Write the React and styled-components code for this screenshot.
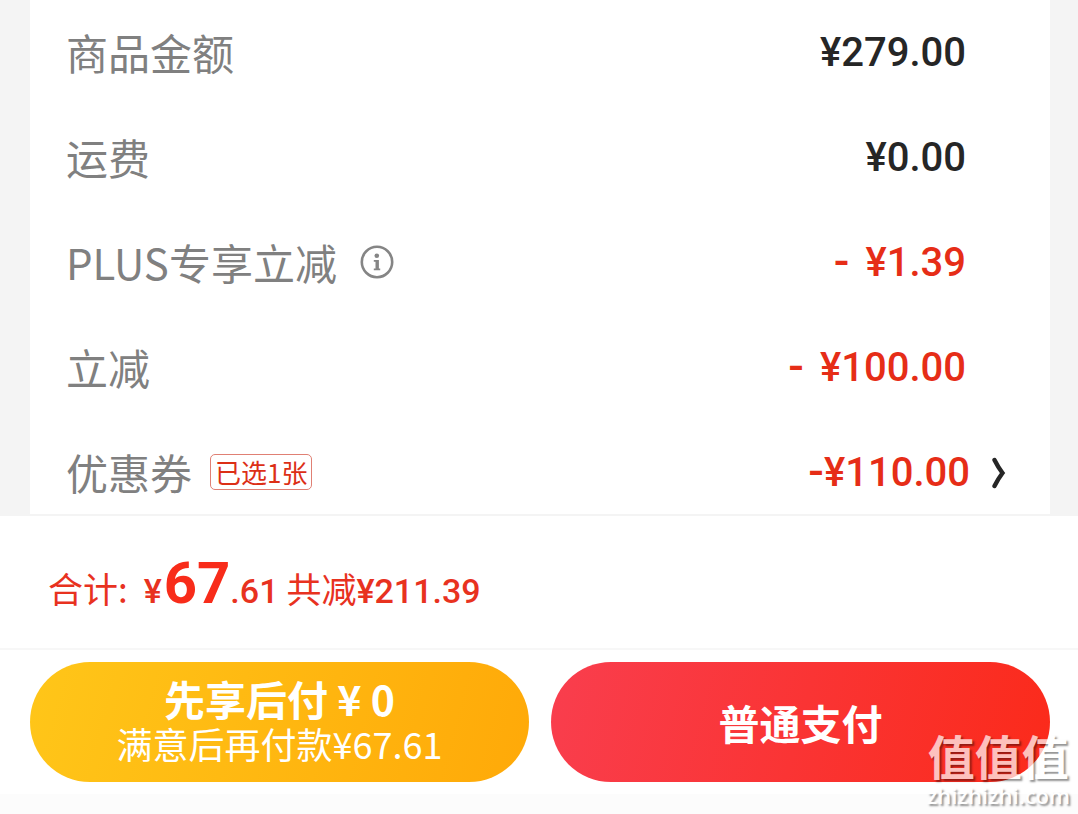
import React from 'react';
import styled, { createGlobalStyle } from 'styled-components';

const GlobalStyle = createGlobalStyle`
  * {
    box-sizing: border-box;
  }

  body {
    margin: 0;
    background: #fcfcfc;
    font-family: 'Noto Sans CJK SC', 'Noto Sans', sans-serif;
  }

  button {
    font-family: inherit;
    border: none;
    padding: 0;
    cursor: pointer;
  }
`;

const Page = styled.main`
  position: relative;
  min-height: 100vh;
  overflow: hidden;
`;

const PriceSection = styled.section`
  padding: 0 28px 0 30px;
  background: #f4f4f4;
`;

const PriceList = styled.dl`
  display: flex;
  flex-direction: column;
  gap: 25px;
  margin: 0;
  padding: 14px 84px 0 36px;
  background: #fff;
  border-bottom: 2px solid #f4f4f4;
`;

const PriceRow = styled.div`
  display: flex;
  align-items: center;
  justify-content: space-between;
  height: 80px;
`;

const Label = styled.dt`
  display: flex;
  align-items: center;
  padding-bottom: 4px;
  font-size: 42px;
  line-height: 76px;
  color: #808080;
`;

const Amount = styled.dd`
  display: flex;
  align-items: center;
  margin: 0 ${({ $linked }) => ($linked ? '-42px' : '0')} 2px 0;
  font-family: Roboto, 'Noto Sans CJK SC', sans-serif;
  font-size: 40px;
  font-weight: 500;
  line-height: 60px;
  color: ${({ $discount }) => ($discount ? '#e62d17' : '#262626')};
`;

const Sign = styled.span`
  margin-right: ${({ $spaced }) => ($spaced ? '16px' : '0')};
  padding-bottom: 4px;
  font-family: Roboto, sans-serif;
  font-size: 46px;
  line-height: 56px;
`;

const InfoButton = styled.button`
  display: flex;
  margin-left: 23px;
  background: none;
  color: #858585;
`;

const CouponTag = styled.span`
  margin-left: 18px;
  padding: 0 4px;
  border: 1px solid #e08074;
  border-radius: 5px;
  font-size: 26px;
  line-height: 34px;
  color: #dc2f16;
`;

const ArrowButton = styled.button`
  display: flex;
  margin-left: 22px;
  background: none;
  color: #262626;
`;

const TotalBar = styled.section`
  display: flex;
  align-items: baseline;
  height: 134px;
  padding: 25px 48px 0;
  background: #fff;
  border-bottom: 2px solid #f7f7f7;
  font-size: 35px;
  line-height: 84px;
  color: #e8321f;
`;

const TotalLabel = styled.span`
  margin-right: 16px;
`;

const Price = styled.span`
  font-family: Roboto, 'Noto Sans CJK SC', sans-serif;
  font-size: 34px;
  font-weight: 500;
`;

const BigPrice = styled.strong`
  margin-left: 2px;
  font-family: Roboto, 'Noto Sans CJK SC', sans-serif;
  font-size: 58px;
  font-weight: 700;
  color: #f82c1a;
`;

const Saved = styled.span`
  margin-left: 8px;
`;

const PayBar = styled.footer`
  display: flex;
  gap: 22px;
  padding: 12px 28px 12px 30px;
  background: #fff;
`;

const PayButton = styled.button`
  display: flex;
  flex: 1;
  flex-direction: column;
  align-items: center;
  justify-content: center;
  height: 120px;
  border-radius: 60px;
  color: #fff;
  background: ${({ $primary }) =>
    $primary
      ? 'linear-gradient(105deg, #f93e4e 0%, #fb2a1a 100%)'
      : 'linear-gradient(105deg, #ffc619 0%, #ffa908 100%)'};
`;

const PayTitle = styled.span`
  font-size: 41px;
  font-weight: 700;
  line-height: 44px;
`;

const PayNote = styled.span`
  padding-bottom: 2px;
  font-size: 36px;
  line-height: 46px;
`;

const Watermark = styled.div`
  position: absolute;
  right: 8px;
  bottom: 6px;
  display: flex;
  flex-direction: column;
  align-items: center;
  color: #fff;
  text-shadow: 2px 2px 2px rgba(0, 0, 0, 0.6);
  opacity: 0.7;
  pointer-events: none;
`;

const WatermarkName = styled.span`
  font-size: 47px;
  font-weight: 700;
  line-height: 54px;
`;

const WatermarkSite = styled.span`
  font-family: 'Open Sans', sans-serif;
  font-size: 22px;
  font-weight: 600;
  line-height: 26px;
`;

const InfoIcon = () => (
  <svg width="34" height="34" viewBox="0 0 34 34" fill="none" stroke="currentColor">
    <circle cx="17" cy="17" r="15.2" strokeWidth="2.6" />
    <circle cx="16.8" cy="10.8" r="2.3" fill="currentColor" stroke="none" />
    <path d="M17.2 15v9.6" strokeWidth="3.4" />
    <path d="M13.8 15.8h4M13.8 24.4h6.4" strokeWidth="1.8" />
  </svg>
);

const ArrowIcon = () => (
  <svg width="16" height="32" viewBox="0 0 16 32" fill="none" stroke="currentColor">
    <path d="M2.5 3Q6 10 10.5 16Q6 22 2.5 29" strokeWidth="4.4" strokeLinecap="round" />
  </svg>
);

const rows = [
  { label: '商品金额', amount: '¥279.00' },
  { label: '运费', amount: '¥0.00' },
  { label: 'PLUS专享立减', amount: '¥1.39', discount: true, info: true },
  { label: '立减', amount: '¥100.00', discount: true },
  { label: '优惠券', amount: '¥110.00', discount: true, tag: '已选1张', linked: true },
];

function App() {
  return (
    <Page>
      <GlobalStyle />
      <PriceSection>
        <PriceList>
          {rows.map((row) => (
            <PriceRow key={row.label}>
              <Label>
                {row.label}
                {row.info && (
                  <InfoButton type="button" aria-label="说明">
                    <InfoIcon />
                  </InfoButton>
                )}
                {row.tag && <CouponTag>{row.tag}</CouponTag>}
              </Label>
              <Amount $discount={row.discount} $linked={row.linked}>
                {row.discount && <Sign $spaced={!row.linked}>-</Sign>}
                {row.amount}
                {row.linked && (
                  <ArrowButton type="button" aria-label="选择优惠券">
                    <ArrowIcon />
                  </ArrowButton>
                )}
              </Amount>
            </PriceRow>
          ))}
        </PriceList>
      </PriceSection>
      <TotalBar>
        <TotalLabel>合计:</TotalLabel>
        <Price>¥</Price>
        <BigPrice>67</BigPrice>
        <Price>.61</Price>
        <Saved>共减</Saved>
        <Price>¥211.39</Price>
      </TotalBar>
      <PayBar>
        <PayButton type="button">
          <PayTitle>先享后付 ¥ 0</PayTitle>
          <PayNote>满意后再付款¥67.61</PayNote>
        </PayButton>
        <PayButton type="button" $primary>
          <PayTitle>普通支付</PayTitle>
        </PayButton>
      </PayBar>
      <Watermark>
        <WatermarkName>值值值</WatermarkName>
        <WatermarkSite>zhizhizhi.com</WatermarkSite>
      </Watermark>
    </Page>
  );
}

export default App;
